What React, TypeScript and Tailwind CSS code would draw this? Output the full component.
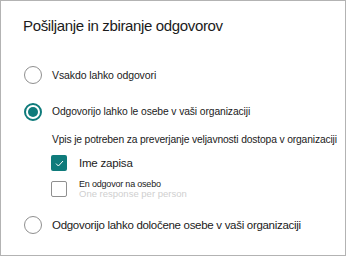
import React from 'react';

const TEAL = '#0f7b7b';

function Radio({ checked }: { checked?: boolean }) {
  if (checked) {
    return (
      <span className="w-[18px] h-[18px] rounded-full border-2 border-[#0f7b7b] flex items-center justify-center shrink-0">
        <span className="w-[10px] h-[10px] rounded-full bg-[#0f7b7b]" />
      </span>
    );
  }
  return <span className="w-[18px] h-[18px] rounded-full border border-[#8f8f8f] bg-white shrink-0" />;
}

export default function App() {
  return (
    <div className="w-[346px] h-[256px] border border-[#b3b3b3] bg-white overflow-hidden font-['Liberation_Sans',Arial,sans-serif] text-[#1b1b1b]">
      {/* Header */}
      <div className="pl-[22px] pt-[15px] h-[36px]">
        <h1 className="text-[15px] leading-[20px] tracking-[-0.35px] text-[#1b1b1b]">
          Pošiljanje in zbiranje odgovorov
        </h1>
      </div>

      <div className="flex flex-col pl-[23px]">
        {/* Option 1 */}
        <div className="mt-[28px] h-[20px] flex items-center gap-[10px]">
          <Radio />
          <span className="text-[10.5px] leading-[14px] tracking-[-0.1px]">Vsakdo lahko odgovori</span>
        </div>

        {/* Option 2 */}
        <div className="mt-[17px] h-[20px] flex items-center gap-[10px]">
          <Radio checked />
          <span className="text-[10.3px] leading-[14px] tracking-[-0.1px]">Odgovorijo lahko le osebe v vaši organizaciji</span>
        </div>

        <div className="ml-[28px] mt-[11px] h-[14px] text-[10.3px] leading-[14px] tracking-[-0.15px] whitespace-nowrap">
          Vpis je potreben za preverjanje veljavnosti dostopa v organizaciji
        </div>

        <div className="ml-[27px] mt-[7px] h-[18px] flex items-center gap-[12px]">
          <span className="w-[16px] h-[16px] rounded-[2px] flex items-center justify-center" style={{ backgroundColor: TEAL }}>
            <svg width="9" height="7" viewBox="0 0 9 7" fill="none">
              <path d="M1 3.6 L3.4 6 L8 1" stroke="#ffffff" strokeWidth="1" />
            </svg>
          </span>
          <span className="text-[11.5px] leading-[16px] tracking-[-0.2px]">Ime zapisa</span>
        </div>

        <div className="ml-[27px] mt-[9px] h-[16px] flex items-start gap-[12px]">
          <span className="w-[16px] h-[16px] rounded-[2px] border border-[#8f8f8f] bg-white shrink-0" />
          <div className="flex flex-col">
            <span className="text-[9px] leading-[9px] -mt-[1px] tracking-[-0.2px]">En odgovor na osebo</span>
            <span className="text-[9.5px] leading-[10px] text-[#cfcfcf] whitespace-nowrap">
              One response per person
            </span>
          </div>
        </div>

        {/* Option 3 */}
        <div className="mt-[18px] h-[20px] flex items-center gap-[10px]">
          <Radio />
          <span className="text-[11.5px] leading-[16px] tracking-[-0.3px]">Odgovorijo lahko določene osebe v vaši organizaciji</span>
        </div>
      </div>
    </div>
  );
}
